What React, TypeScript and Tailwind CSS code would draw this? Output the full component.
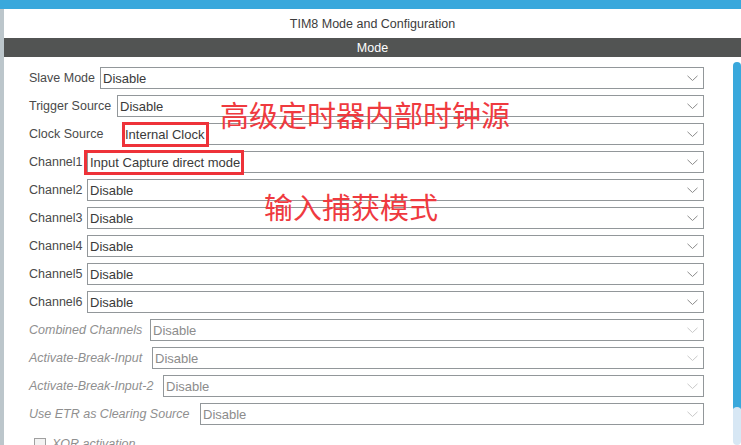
import React from "react";

type Row = { label: string; value: string; lw: string; disabled?: boolean };

const rows: Row[] = [
  { label: "Slave Mode", value: "Disable", lw: "w-[71px]" },
  { label: "Trigger Source", value: "Disable", lw: "w-[88px]" },
  { label: "Clock Source", value: "Internal Clock", lw: "w-[93px]" },
  { label: "Channel1", value: "Input Capture direct mode", lw: "w-[58px]" },
  { label: "Channel2", value: "Disable", lw: "w-[58px]" },
  { label: "Channel3", value: "Disable", lw: "w-[58px]" },
  { label: "Channel4", value: "Disable", lw: "w-[58px]" },
  { label: "Channel5", value: "Disable", lw: "w-[58px]" },
  { label: "Channel6", value: "Disable", lw: "w-[58px]" },
  { label: "Combined Channels", value: "Disable", lw: "w-[121px]", disabled: true },
  { label: "Activate-Break-Input", value: "Disable", lw: "w-[123px]", disabled: true },
  { label: "Activate-Break-Input-2", value: "Disable", lw: "w-[134px]", disabled: true },
  { label: "Use ETR as Clearing Source", value: "Disable", lw: "w-[171px]", disabled: true },
];

function Chevron({ disabled }: { disabled?: boolean }) {
  return (
    <svg width="11" height="7" viewBox="0 0 11 7" className="shrink-0">
      <polyline
        points="0.5,0.8 5.5,5.5 10.5,0.8"
        fill="none"
        stroke={disabled ? "#c9c9c9" : "#8c8c8c"}
        strokeWidth="1"
      />
    </svg>
  );
}

export default function App() {
  return (
    <div className="relative w-[741px] h-[445px] overflow-hidden bg-white font-['Liberation_Sans',Arial,sans-serif]">
      <div className="h-[9px] bg-[#39a8dc]" />
      <div className="flex h-[436px]">
        <div className="w-[4px] bg-[#bcc6cb]" />
        <div className="flex-1 flex flex-col">
          <div className="h-[29px] pt-[2px] flex items-center justify-center text-[12.5px] text-[#3c3c3c]">
            TIM8 Mode and Configuration
          </div>
          <div className="h-[19px] pt-[1px] bg-[#525453] text-white flex items-center justify-center text-[12.5px]">
            Mode
          </div>
          <div className="flex flex-1 min-h-0">
            <div className="flex-1 pl-[25px] pt-[10px] flex flex-col gap-[6px]">
              {rows.map((r) => (
                <div key={r.label} className="flex items-center h-[22px]">
                  <div
                    className={`${r.lw} shrink-0 whitespace-nowrap text-[12.5px] pt-[1px] ${
                      r.disabled ? "italic text-[#8f8f8f]" : "text-[#4a4a4a]"
                    }`}
                  >
                    {r.label}
                  </div>
                  <div className="flex-1 h-[22px] border border-[#92979a] flex items-center justify-between pl-[2px] pr-[5px]">
                    <span
                      className={`text-[13px] whitespace-nowrap pt-[1px] ${
                        r.disabled ? "text-[#8c8c8c]" : "text-[#3a3a3a]"
                      }`}
                    >
                      {r.value}
                    </span>
                    <Chevron disabled={r.disabled} />
                  </div>
                </div>
              ))}
              <div className="flex items-center h-[14px] mt-[6px] ml-[5px]">
                <div className="w-[12px] h-[12px] border border-[#a0a0a0] bg-[#f3f3f3]" />
                <span className="ml-[6px] text-[12.5px] italic text-[#8f8f8f] whitespace-nowrap">
                  XOR activation
                </span>
              </div>
            </div>
            <div className="w-[8px] ml-[29px] mt-[5px] flex flex-col">
              <div className="h-[349px] rounded-full bg-[#39a8dc]" />
              <div className="flex-1 -mt-[4px] rounded-full bg-[#d7e7f4]" />
            </div>
          </div>
        </div>
      </div>

      {/* annotations */}
      <div className="absolute left-[122px] top-[122px] w-[87px] h-[25px] border-[3px] border-[#ee3239]" />
      <div className="absolute left-[84px] top-[150px] w-[160px] h-[25px] border-[3px] border-[#ee3239]" />
      <div className="absolute left-[220px] top-[100px] text-[29px] leading-none text-[#ef3a3f] whitespace-nowrap font-['Noto_Sans_CJK_SC',sans-serif]">
        高级定时器内部时钟源
      </div>
      <div className="absolute left-[264px] top-[192px] text-[29px] leading-none text-[#ef3a3f] whitespace-nowrap font-['Noto_Sans_CJK_SC',sans-serif]">
        输入捕获模式
      </div>
    </div>
  );
}
